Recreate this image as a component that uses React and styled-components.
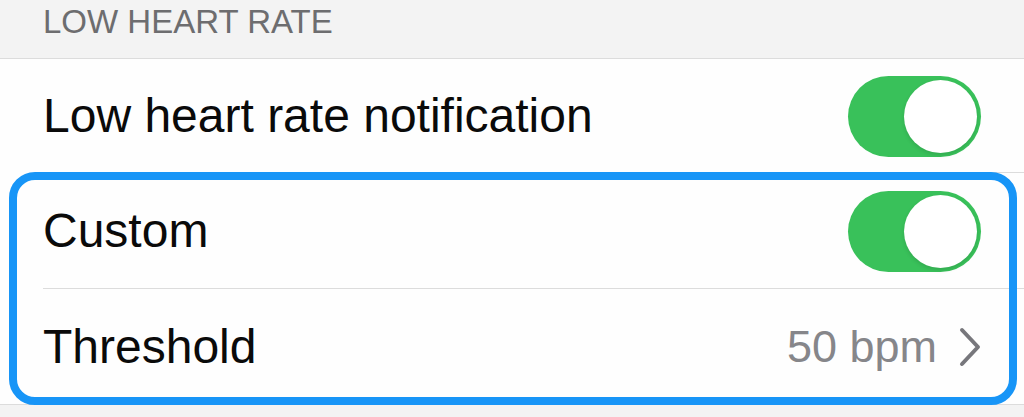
import React from "react";
import styled, { createGlobalStyle } from "styled-components";

const GlobalStyle = createGlobalStyle`
  html, body {
    margin: 0;
    padding: 0;
    background: #f3f3f3;
    font-family: "Liberation Sans", Arial, sans-serif;
  }
`;

const Page = styled.div`
  width: 1024px;
  height: 417px;
  overflow: hidden;
  background: #f3f3f3;
`;

const SectionHeader = styled.div`
  box-sizing: border-box;
  height: 58px;
  padding: 5px 43px 0;
  font-size: 33px;
  line-height: 33px;
  color: #6d6d6f;
`;

const List = styled.div`
  background: #fefefe;
  border-top: 1px solid #dcdcdc;
  border-bottom: 1px solid #dcdcdc;
`;

const Row = styled.div`
  position: relative;
  box-sizing: border-box;
  height: ${(p) => p.$height}px;
  padding: 0 43px;
  display: flex;
  align-items: center;
  justify-content: space-between;

  &::after {
    content: "";
    display: ${(p) => (p.$last ? "none" : "block")};
    position: absolute;
    left: 43px;
    right: 0;
    bottom: 0;
    height: 1px;
    background: #dcdcdc;
  }
`;

const Label = styled.span`
  font-size: 48px;
  line-height: 48px;
  color: #0a0a0a;
`;

const Value = styled.span`
  display: flex;
  align-items: center;
  gap: 22px;
  font-size: 45px;
  line-height: 48px;
  color: #86868a;
`;

const Highlight = styled.div`
  position: relative;

  &::before {
    content: "";
    position: absolute;
    top: -1px;
    bottom: -1px;
    left: 9px;
    right: 7px;
    border: 8px solid #1795f7;
    border-radius: 26px;
    pointer-events: none;
    z-index: 1;
  }
`;

const Track = styled.div`
  position: relative;
  width: 133px;
  height: 81px;
  border-radius: 41px;
  background: ${(p) => (p.$on ? "#39c15a" : "#e5e5ea")};
  flex-shrink: 0;
`;

const Knob = styled.div`
  position: absolute;
  top: 4px;
  ${(p) => (p.$on ? "right: 4px;" : "left: 4px;")}
  width: 73px;
  height: 73px;
  border-radius: 50%;
  background: #ffffff;
  box-shadow: 0 2px 4px rgba(0, 0, 0, 0.12);
`;

const Toggle = ({ on }) => (
  <Track $on={on}>
    <Knob $on={on} />
  </Track>
);

const Chevron = () => (
  <svg width="22" height="40" viewBox="0 0 22 40" fill="none">
    <path
      d="M3 3 L19 20 L3 37"
      stroke="#77777c"
      strokeWidth="4"
      strokeLinecap="round"
      strokeLinejoin="round"
    />
  </svg>
);

export default function App() {
  return (
    <Page>
      <GlobalStyle />
      <SectionHeader>LOW HEART RATE</SectionHeader>
      <List>
        <Row $height={114}>
          <Label>Low heart rate notification</Label>
          <Toggle on />
        </Row>
        <Highlight>
          <Row $height={116}>
            <Label>Custom</Label>
            <Toggle on />
          </Row>
          <Row $height={115} $last>
            <Label>Threshold</Label>
            <Value>
              50 bpm
              <Chevron />
            </Value>
          </Row>
        </Highlight>
      </List>
    </Page>
  );
}
